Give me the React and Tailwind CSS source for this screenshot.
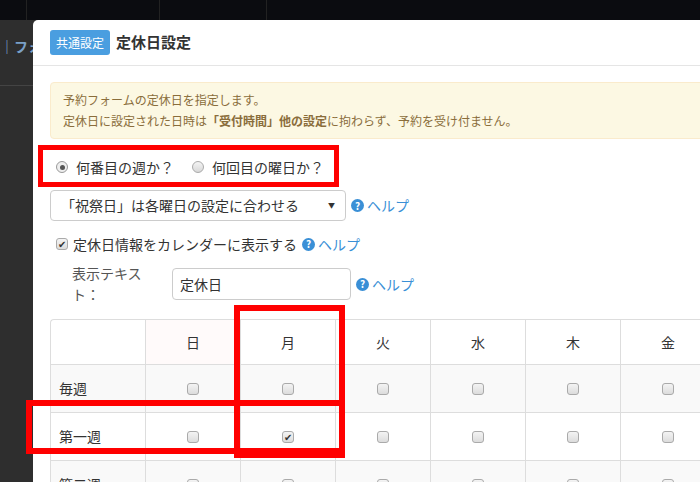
import React from "react";

const Help = () => (
  <span className="inline-flex items-center gap-[3px] text-[#3a8fd6] text-[14px]">
    <span className="w-[13px] h-[13px] rounded-full bg-[#3a8fd6] text-white text-[10px] font-bold flex items-center justify-center leading-none">?</span>
    ヘルプ
  </span>
);

const Box = ({ checked }) => (
  <span className="inline-flex w-[12px] h-[12px] rounded-[3px] border border-[#aaa] bg-gradient-to-b from-[#f4f4f4] to-[#dcdcdc] items-center justify-center text-[10px] leading-none text-[#333]">
    {checked ? "✔" : ""}
  </span>
);

const days = ["日", "月", "火", "水", "木", "金"];
const rows = [
  { label: "毎週", bg: "bg-[#f9f9f9]", checks: [] },
  { label: "第一週", bg: "bg-white", checks: [1] },
  { label: "第二週", bg: "bg-[#f9f9f9]", checks: [] },
];

export default function App() {
  return (
    <div className="relative w-[700px] h-[482px] overflow-hidden bg-[#2e2e2e] text-[14px] text-[#333]" style={{ fontFamily: '"Noto Sans CJK JP", "Noto Sans", sans-serif' }}>
      <div className="h-[20px] bg-[#0b0c10] flex">
        <div className="w-[27px] border-r border-[#222]" />
        <div className="w-[133px] border-r border-[#222]" />
        <div className="w-[107px] border-r border-[#222]" />
      </div>
      <div className="absolute left-0 top-[36px] text-[#7aa0c8] text-[14px] font-bold">｜フォ</div>
      <div className="absolute left-0 top-[85px] w-[33px] h-px bg-[#444]" />

      <div className="absolute left-[33px] top-[20px] w-[700px] h-[470px] bg-white rounded-tl-[5px]">
        <div className="h-[46px] border-b border-[#e5e5e5] flex items-center pl-[17px] gap-[6px]">
          <span className="bg-[#4a9ee0] text-white text-[12px] px-[6px] h-[25px] flex items-center rounded-[3px]">共通設定</span>
          <span className="font-bold text-[15px] text-[#333]">定休日設定</span>
        </div>
        <div className="pl-[17px]">
          <div className="mt-[16px] h-[57px] bg-[#fcf8e3] border border-[#faebcc] rounded-l-[4px] text-[#8a6d3b] text-[12px] pl-[12px] flex flex-col justify-center gap-[3px]">
            <div>予約フォームの定休日を指定します。</div>
            <div>定休日に設定された日時は<b>「受付時間」他の設定</b>に拘わらず、予約を受け付ません。</div>
          </div>
          <div className="mt-[5px] h-[46px] flex items-center gap-[18px] pl-[6px]">
            <span className="flex items-center gap-[8px]">
              <span className="w-[12px] h-[12px] rounded-full border border-[#999] bg-[#eee] flex items-center justify-center"><span className="w-[5px] h-[5px] rounded-full bg-[#555]" /></span>
              何番目の週か？
            </span>
            <span className="flex items-center gap-[8px]">
              <span className="w-[12px] h-[12px] rounded-full border border-[#aaa] bg-gradient-to-b from-[#f4f4f4] to-[#d8d8d8]" />
              何回目の曜日か？
            </span>
          </div>
          <div className="flex items-center gap-[5px]">
            <div className="w-[296px] h-[31px] border border-[#ccc] rounded-[4px] flex items-center justify-between px-[10px]">
              <span>「祝祭日」は各曜日の設定に合わせる</span>
              <span className="text-[7px]">▼</span>
            </div>
            <Help />
          </div>
          <div className="h-[46px] flex items-center gap-[5px] pl-[6px]">
            <span className="flex items-center gap-[5px]"><Box checked />定休日情報をカレンダーに表示する</span>
            <Help />
          </div>
          <div className="flex items-center gap-[5px] -mt-[4px]">
            <span className="pl-[22px] w-[117px] text-[#555]">表示テキスト：</span>
            <div className="w-[179px] h-[32px] border border-[#ccc] rounded-[4px] flex items-center px-[7px]">定休日</div>
            <Help />
          </div>
          <div className="mt-[14px] border-t border-l border-[#ddd] rounded-tl-[4px]">
            <div className="flex h-[45px]">
              <div className="w-[95px] border-r border-b border-[#ddd]" />
              {days.map((d, i) => (
                <div key={d} className={`w-[95px] shrink-0 border-r border-b border-[#ddd] flex items-center justify-center ${i === 0 ? "bg-[#fffafa]" : ""}`}>{d}</div>
              ))}
            </div>
            {rows.map((r) => (
              <div key={r.label} className={`flex h-[48px] ${r.bg}`}>
                <div className="w-[95px] border-r border-b border-[#ddd] flex items-center pl-[8px]">{r.label}</div>
                {days.map((d, i) => (
                  <div key={d} className="w-[95px] shrink-0 border-r border-b border-[#ddd] flex items-center justify-center"><Box checked={r.checks.includes(i)} /></div>
                ))}
              </div>
            ))}
          </div>
        </div>
      </div>

      <div className="absolute left-[38px] top-[145px] w-[301px] h-[42px] border-[5px] border-[#f00]" />
      <div className="absolute left-[234px] top-[305px] w-[111px] h-[153px] border-[6px] border-[#f00]" />
      <div className="absolute left-[26px] top-[400px] w-[319px] h-[54px] border-[6px] border-[#f00]" />
    </div>
  );
}
